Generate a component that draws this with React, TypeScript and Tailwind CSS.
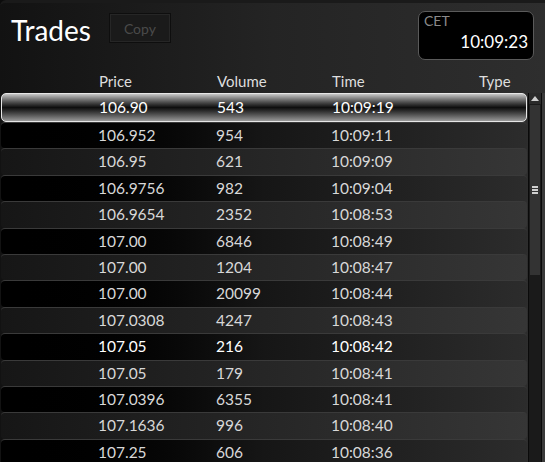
import React from "react"

type Trade = { price: string; volume: string; time: string; bold?: boolean }

const trades: Trade[] = [
  { price: "106.90", volume: "543", time: "10:09:19" },
  { price: "106.952", volume: "954", time: "10:09:11" },
  { price: "106.95", volume: "621", time: "10:09:09" },
  { price: "106.9756", volume: "982", time: "10:09:04" },
  { price: "106.9654", volume: "2352", time: "10:08:53" },
  { price: "107.00", volume: "6846", time: "10:08:49" },
  { price: "107.00", volume: "1204", time: "10:08:47" },
  { price: "107.00", volume: "20099", time: "10:08:44" },
  { price: "107.0308", volume: "4247", time: "10:08:43" },
  { price: "107.05", volume: "216", time: "10:08:42", bold: true },
  { price: "107.05", volume: "179", time: "10:08:41" },
  { price: "107.0396", volume: "6355", time: "10:08:41" },
  { price: "107.1636", volume: "996", time: "10:08:40" },
  { price: "107.25", volume: "606", time: "10:08:36" },
]

function Cells({ t }: { t: Trade }) {
  return (
    <>
      <span className="absolute left-[97px]">{t.price}</span>
      <span className="absolute left-[215px]">{t.volume}</span>
      <span className="absolute left-[330px]">{t.time}</span>
    </>
  )
}

export default function App() {
  return (
    <div
      className="relative h-[462px] w-[545px] overflow-hidden bg-[#0c0c0c] text-[#d8d8d8]"
      style={{ fontFamily: "Lato, 'Open Sans', sans-serif" }}
    >
      <div className="flex h-full flex-col rounded-tl-[6px] border-t-[3px] border-[#1a1a1a] bg-gradient-to-r from-[#121212] via-[#242424] to-[#2e2e2e]">
        {/* header */}
        <div className="flex h-[61px] shrink-0 items-start">
          <h1 className="mt-[10px] ml-[11px] text-[28px] leading-[34px] text-white">Trades</h1>
          <button className="mt-[10px] ml-[18px] h-[30px] w-[62px] border border-[#0e0e0e] bg-[#1a1a1a] text-[14px] text-[#4a4a4a] shadow-[inset_0_0_0_1px_#262626]">
            Copy
          </button>
          <div className="mt-[8px] ml-auto mr-[11px] flex h-[49px] w-[116px] flex-col rounded-[7px] border border-[#5a5a5a] bg-black px-[5px]">
            <span className="text-[14px] leading-[18px] text-[#8a8a8a]">CET</span>
            <span className="self-end text-[17px] leading-[24px] text-white">10:09:23</span>
          </div>
        </div>

        {/* column headers */}
        <div className="relative h-[29px] shrink-0 pt-[7px] text-[15px] leading-[20px] text-[#dedede]">
          <span className="absolute left-[99px]">Price</span>
          <span className="absolute left-[217px]">Volume</span>
          <span className="absolute left-[332px]">Time</span>
          <span className="absolute left-[479px]">Type</span>
        </div>

        <div className="flex min-h-0 flex-1 overflow-hidden">
          <div className="flex w-[527px] flex-col pl-[1px] text-[15.5px]">
            {trades.map((t, i) => {
              if (i === 0) {
                return (
                  <div
                    key={i}
                    className="relative flex h-[29px] shrink-0 items-center rounded-[5px] border border-[#e6e6e6] bg-gradient-to-b from-[#c8c8c8] via-[#0e0e0e] to-[#9a9a9a] pl-[1px] text-white"
                  >
                    <Cells t={t} />
                  </div>
                )
              }
              const dark = i % 2 === 1
              return (
                <div
                  key={i}
                  className={
                    "relative flex h-[26.4px] shrink-0 items-center rounded-[4px] border-t border-[#3a3a3a] pl-[1px] " +
                    (dark
                      ? "bg-gradient-to-r from-[#000000] via-[#161616] to-[#2c2c2c]"
                      : "bg-gradient-to-r from-[#161616] via-[#262626] to-[#363636]") +
                    (t.bold ? " text-white" : "")
                  }
                >
                  <Cells t={t} />
                </div>
              )
            })}
          </div>

          {/* scrollbar */}
          <div className="ml-[1px] flex w-[14px] flex-col border-x border-[#0a0a0a] bg-[#1c1c1c]">
            <div className="flex h-[11px] shrink-0 items-center justify-center bg-[#2a2a2a]">
              <div className="h-0 w-0 border-x-[4px] border-b-[5px] border-x-transparent border-b-[#cfcfcf]" />
            </div>
            <div className="flex h-[172px] shrink-0 items-center justify-center border border-[#1a1a1a] bg-[#333333]">
              <div className="flex h-[8px] w-[6px] flex-col justify-between">
                <div className="h-[2px] bg-[#d0d0d0]" />
                <div className="h-[2px] bg-[#d0d0d0]" />
                <div className="h-[2px] bg-[#d0d0d0]" />
              </div>
            </div>
            <div className="flex-1 bg-[#1a1a1a]" />
          </div>
          <div className="w-[3px] bg-[#3a3a3a]" />
        </div>
      </div>
    </div>
  )
}
